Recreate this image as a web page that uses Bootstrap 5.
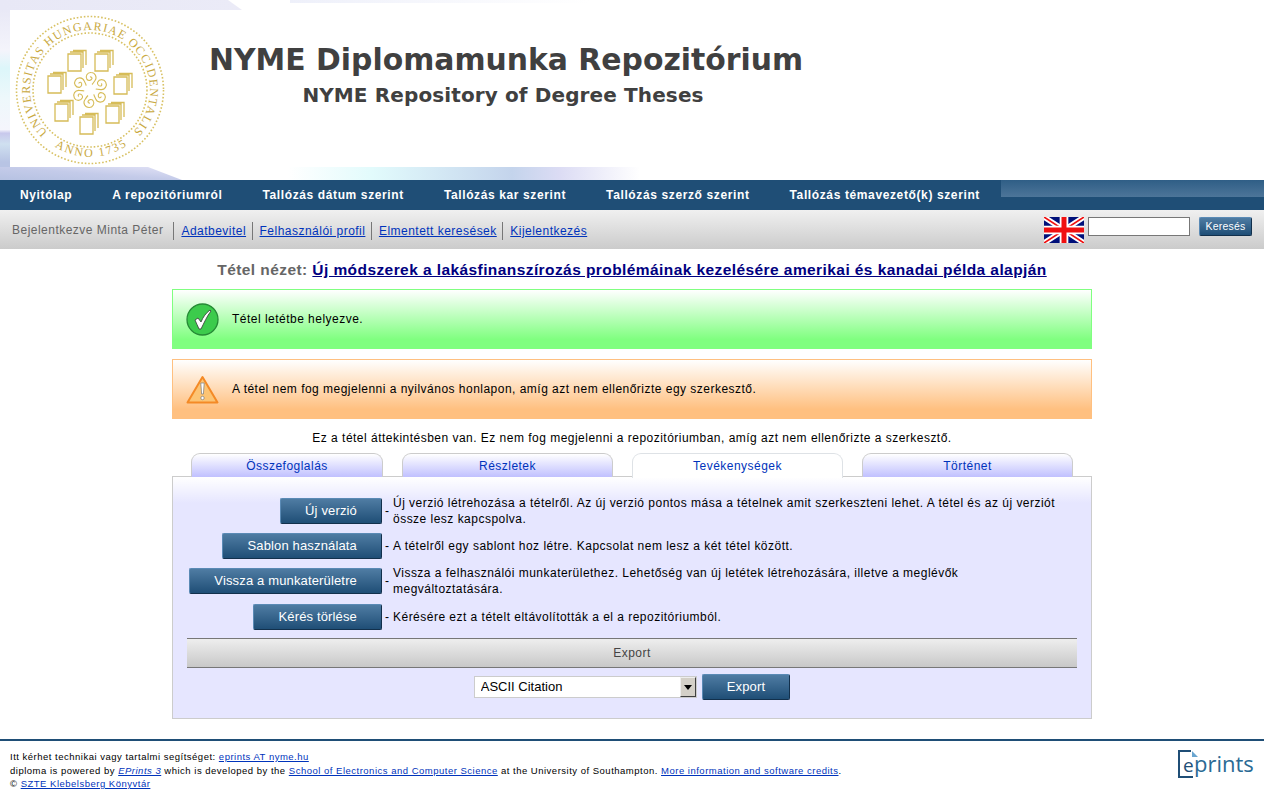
<!DOCTYPE html>
<html lang="hu">
<head>
<meta charset="UTF-8">
<title>NYME Diplomamunka Repozitórium</title>
<link href="https://cdn.jsdelivr.net/npm/bootstrap@5.3.0/dist/css/bootstrap.min.css" rel="stylesheet">
<style>
body { font-family: "Liberation Sans", Arial, sans-serif; font-size: 12px; line-height: 16px; color: #000; letter-spacing: .48px; }
a { color: #0033bb; }
.site-head { height: 180px; padding: 10px 0 13px 10px; position: relative; }
.head-art { position: absolute; left: 0; top: 0; }
.head-inner { height: 157px; background: #fff; position: relative; }
.seal { width: 170px; }
.head-titles { margin-left: 29px; padding-top: 32px; width: 594px; color: #404040; font-family: "DejaVu Sans", sans-serif; font-weight: 700; text-align: center; letter-spacing: 0; white-space: nowrap; }
.head-titles h1 { font-size: 29.85px; line-height: 36px; margin: 0; font-weight: 700; }
.head-titles h2 { font-size: 20px; line-height: 34px; margin: 0; padding-right: 6px; font-weight: 700; letter-spacing: .12px; }
.main-nav { height: 30px; background: #1f4e76; padding-left: 20px; white-space: nowrap; }
.main-nav a { color: #fff; font-weight: 700; text-decoration: none; letter-spacing: .62px; margin-right: 40px; line-height: 30px; }
.main-nav a:last-of-type { margin-right: 0; }
.nav-end { flex: none; width: 263px; height: 17px; background: linear-gradient(180deg, #2f5e86, #4d7599); }
.user-bar { height: 39px; background: linear-gradient(180deg, #f0f0f0, #cbcbcb); padding: 0 12px; }
.user-name { color: #666; margin-right: 10px; }
.user-bar .tool { border-left: 1px solid #777; padding: 0 5.5px 0 7px; line-height: 18px; margin-top: 2px; }
.search-box { width: 102px; height: 19px; border: 1px solid #777; background: #fff; margin: 0 9px 7px 4px; padding: 0; border-radius: 0; }
.page-title { margin: 12px 0 10px; font-size: 15.5px; line-height: 18px; font-weight: 700; color: #666; text-align: center; letter-spacing: .42px; }
.page-title a { color: #000080; }
.main-col { width: 920px; margin: 0 auto; }
.msg { height: 60px; margin: 0 0 10px; padding: 0 0 0 13px; border-radius: 0; gap: 13px; color: #000; }
.msg-ok { border: 1px solid #80ff80; background: linear-gradient(180deg, #fff, #80ff80 85%); }
.msg-warn { border: 1px solid #ffc080; background: linear-gradient(180deg, #fff, #ffc080 85%); }
.note-line { text-align: center; margin: 0; height: 24px; line-height: 18px; }
.tab-row { padding-left: 19px; gap: 19px; border: 0; height: 24px; position: relative; z-index: 1; }
.tab-row .nav-item { width: 211px; }
.tab-row .nav-item:first-child { width: 192px; }
.tab-row .nav-link { height: 24px; padding: 4px 0 0; margin: 0; line-height: 16px; color: #0033bb; text-align: center; border: 1px solid #ccc; border-bottom: 0; border-radius: 9px 9px 0 0; background: linear-gradient(180deg, #fff, #c0c0ff); }
.tab-row .nav-link.active { background: #fff; color: #0033bb; height: 25px; }
.tab-pane-box { height: 243px; margin-top: -1px; border: 1px solid #ccc; background: linear-gradient(180deg, #fff 0, #e6e6ff 26px); padding: 18px 14px 0; }
.act-row { display: flex; align-items: center; margin-bottom: 6px; }
.act-row:nth-child(3) { margin-bottom: 7px; }
.act-btn-col { width: 195px; text-align: right; flex: none; }
.act-dash { width: 11px; padding-left: 3px; flex: none; }
.act-text { width: 672px; }
.nyme-btn { display: inline-block; height: 26px; padding: 0 24px; border-radius: 2px; border: 1px solid; border-color: #5a8ab5 #12304c #12304c #5a8ab5; background: linear-gradient(180deg, #4f7ca3, #1f4e76); color: #fff; font-size: 13px; line-height: 23px; letter-spacing: .15px; }
.nyme-btn:hover { color: #fff; }
.btn-small { height: 19px; width: 53px; padding: 0; margin-bottom: 7px; font-size: 10.5px; line-height: 16px; letter-spacing: .2px; }
.export-head { height: 30px; margin-top: 8px; border-top: 1px solid #777; border-bottom: 1px solid #777; background: linear-gradient(180deg, #eee, #c8c8c8); color: #444; text-align: center; line-height: 28px; }
.export-row { margin-top: 6px; gap: 5px; }
.select-wrap { width: 223px; height: 22px; border: 1px solid #ccc; background: #fff; }
.select-wrap select { flex: 1; min-width: 0; border: 0; appearance: none; background: transparent; padding: 0 0 0 6px; font-size: 13px; letter-spacing: 0; outline: 0; }
.select-arrow { width: 16px; height: 20px; background: #d4d0c8; border: 1px solid; border-color: #eee #404040 #404040 #eee; }
.site-foot { margin-top: 20px; border-top: 2px solid #1f4e76; padding: 9px 10px 0; font-size: 9.5px; line-height: 13.5px; letter-spacing: .5px; }
.site-foot a { color: #0033bb; }
.seal text { font-family: "Liberation Serif", serif; fill: #c9a93f; letter-spacing: 0; }
</style>
</head>
<body>

<header class="site-head">
  <svg class="head-art" width="1264" height="180" viewBox="0 0 1264 180" aria-hidden="true">
    <defs>
      <linearGradient id="artLeft" x1="0" y1="0" x2="0" y2="1">
        <stop offset="0" stop-color="#e6e6f5"/><stop offset=".28" stop-color="#f4f4fb"/>
        <stop offset=".38" stop-color="#dcf6fa"/><stop offset=".55" stop-color="#eef8fb"/>
        <stop offset=".72" stop-color="#f5f5fc"/><stop offset=".74" stop-color="#c8c8ec"/>
        <stop offset=".8" stop-color="#cfe0f0"/><stop offset=".9" stop-color="#b8c4e4"/>
        <stop offset="1" stop-color="#b8c4e4"/>
      </linearGradient>
      <linearGradient id="artTop" x1="0" y1="0" x2="1" y2="0">
        <stop offset="0" stop-color="#e8e8f6"/><stop offset="1" stop-color="#ebebf7"/>
      </linearGradient>
      <linearGradient id="artPale" x1="0" y1="0" x2="1" y2="0">
        <stop offset="0" stop-color="#eef0fa"/><stop offset="1" stop-color="#fff"/>
      </linearGradient>
      <linearGradient id="artBottom" x1="0" y1="1" x2="1" y2="0">
        <stop offset="0" stop-color="#b6c2e2"/><stop offset=".5" stop-color="#c4cbe9"/><stop offset="1" stop-color="#e2e2f6"/>
      </linearGradient>
      <linearGradient id="artBand" x1="240" y1="0" x2="640" y2="0" gradientUnits="userSpaceOnUse">
        <stop offset="0" stop-color="#fff"/><stop offset=".12" stop-color="#fff"/>
        <stop offset=".33" stop-color="#e2fbfc"/><stop offset=".68" stop-color="#c4d4ec"/>
        <stop offset=".8" stop-color="#dcdcf4"/><stop offset="1" stop-color="#fff"/>
      </linearGradient>
    </defs>
    <rect width="10" height="180" fill="url(#artLeft)"/>
    <path d="M0 0H228L242 10H0Z" fill="url(#artTop)"/>
    <rect x="290" width="300" height="3" fill="url(#artPale)"/>
    <path d="M0 167H148L182 180H0Z" fill="url(#artBottom)"/>
    <rect x="240" y="167" width="400" height="13" fill="url(#artBand)"/>
  </svg>
  <div class="head-inner d-flex">
    <svg class="seal" width="170" height="157" viewBox="0 0 170 157">
      <defs>
        <path id="arcTop" d="M37.600 122.400A60 60 0 1 1 122.400 122.400"/>
        <path id="arcBot" d="M42 135A67 67 0 0 0 118 135"/>
        <g id="bookL" fill="none" stroke="#d6bc58" stroke-width="1.300">
          <path d="M0 4H13V21H0Z"/>
          <path d="M2 2H15V18M5 .5H18V15"/>
        </g>
        <g id="curl" fill="none" stroke="#d6bc58" stroke-width="1.100">
          <path d="M0 0a1.500 1.500 0 0 1 2 1.500a3 3 0 0 1 -5 1a4.500 4.500 0 0 1 4 -7a5 5 0 0 1 4 8q-2 3 -3 4"/>
        </g>
      </defs>
      <circle cx="80" cy="80" r="73.500" fill="none" stroke="#d8c163" stroke-width="1.600" stroke-dasharray="1.600 1.900"/>
      <circle cx="80" cy="80" r="57" fill="none" stroke="#d8c163" stroke-width="1.600" stroke-dasharray="1.600 1.900"/>
      <text font-size="12"><textPath href="#arcTop" textLength="281">UNIVERSITAS HUNGARIAE OCCIDENTALIS</textPath></text>
      <text font-size="12"><textPath href="#arcBot" startOffset="3" textLength="76">ANNO 1735</textPath></text>
      <use href="#bookL" x="58" y="40"/>
      <use href="#bookL" x="85" y="40"/>
      <use href="#bookL" x="38" y="62"/>
      <use href="#bookL" x="104" y="63"/>
      <use href="#bookL" x="45" y="90"/>
      <use href="#bookL" x="96" y="92"/>
      <use href="#bookL" x="70" y="103"/>
      <use href="#curl" transform="translate(80 67)"/>
      <use href="#curl" transform="rotate(60 80 80) translate(80 67)"/>
      <use href="#curl" transform="rotate(120 80 80) translate(80 67)"/>
      <use href="#curl" transform="rotate(180 80 80) translate(80 67)"/>
      <use href="#curl" transform="rotate(240 80 80) translate(80 67)"/>
      <use href="#curl" transform="rotate(300 80 80) translate(80 67)"/>
    </svg>
    <div class="head-titles">
      <h1>NYME Diplomamunka Repozitórium</h1>
      <h2>NYME Repository of Degree Theses</h2>
    </div>
  </div>
</header>

<nav class="main-nav d-flex">
  <a href="#">Nyitólap</a>
  <a href="#">A repozitóriumról</a>
  <a href="#">Tallózás dátum szerint</a>
  <a href="#">Tallózás kar szerint</a>
  <a href="#">Tallózás szerző szerint</a>
  <a href="#">Tallózás témavezető(k) szerint</a>
  <div class="nav-end ms-auto"></div>
</nav>

<div class="user-bar d-flex align-items-center">
  <span class="user-name">Bejelentkezve Minta Péter</span>
  <a class="tool" href="#">Adatbevitel</a>
  <a class="tool" href="#">Felhasználói profil</a>
  <a class="tool" href="#">Elmentett keresések</a>
  <a class="tool" href="#">Kijelentkezés</a>
  <form class="d-flex align-items-center ms-auto">
    <svg width="40" height="26" viewBox="0 0 60 39">
      <rect width="60" height="39" fill="#00107a"/>
      <path d="M0 0 60 39M60 0 0 39" stroke="#fff" stroke-width="8"/>
      <path d="M0 0 60 39M60 0 0 39" stroke="#f01010" stroke-width="2.500"/>
      <path d="M30 0V39M0 19.500H60" stroke="#fff" stroke-width="13"/>
      <path d="M30 0V39M0 19.500H60" stroke="#f01010" stroke-width="7.500"/>
    </svg>
    <input class="search-box" type="text" aria-label="Keresés">
    <a class="nyme-btn btn-small text-center text-decoration-none" href="#">Keresés</a>
  </form>
</div>

<h2 class="page-title">Tétel nézet: <a href="#">Új módszerek a lakásfinanszírozás problémáinak kezelésére amerikai és kanadai példa alapján</a></h2>

<main class="main-col">
  <div class="alert msg msg-ok d-flex align-items-center">
    <svg width="33" height="33" viewBox="0 0 33 33">
      <circle cx="16.500" cy="16.500" r="15.500" fill="#3ccb4c" stroke="#258a35" stroke-width="1.300"/>
      <path d="M9 17 l3-2 3 4 C17 14 20 10 24 7 l1 1 C21 13 18 20 15 26 l-2 0 C12 23 10 20 9 17z" fill="#fff" stroke="#333" stroke-width=".8"/>
    </svg>
    <div>Tétel letétbe helyezve.</div>
  </div>
  <div class="alert msg msg-warn d-flex align-items-center">
    <svg width="33" height="29" viewBox="0 0 33 29">
      <path d="M16.500 2 L31.500 27.500 H1.500Z" fill="#fcc474" stroke="#f48a26" stroke-width="2" stroke-linejoin="round"/>
      <path d="M14.800 8 h3.400 l-.8 11 h-1.800z" fill="#fff" stroke="#777" stroke-width=".7"/>
      <circle cx="16.500" cy="23" r="1.700" fill="#fff" stroke="#777" stroke-width=".7"/>
    </svg>
    <div>A tétel nem fog megjelenni a nyilvános honlapon, amíg azt nem ellenőrizte egy szerkesztő.</div>
  </div>
  <p class="note-line">Ez a tétel áttekintésben van. Ez nem fog megjelenni a repozitóriumban, amíg azt nem ellenőrizte a szerkesztő.</p>

  <ul class="nav nav-tabs tab-row">
    <li class="nav-item"><a class="nav-link" href="#">Összefoglalás</a></li>
    <li class="nav-item"><a class="nav-link" href="#">Részletek</a></li>
    <li class="nav-item"><a class="nav-link active" href="#">Tevékenységek</a></li>
    <li class="nav-item"><a class="nav-link" href="#">Történet</a></li>
  </ul>
  <div class="tab-pane-box">
    <div class="act-row">
      <div class="act-btn-col"><a class="nyme-btn text-decoration-none" href="#">Új verzió</a></div>
      <div class="act-dash">-</div>
      <div class="act-text">Új verzió létrehozása a tételről. Az új verzió pontos mása a tételnek amit szerkeszteni lehet. A tétel és az új verziót össze lesz kapcspolva.</div>
    </div>
    <div class="act-row">
      <div class="act-btn-col"><a class="nyme-btn text-decoration-none" href="#">Sablon használata</a></div>
      <div class="act-dash">-</div>
      <div class="act-text">A tételről egy sablont hoz létre. Kapcsolat nem lesz a két tétel között.</div>
    </div>
    <div class="act-row">
      <div class="act-btn-col"><a class="nyme-btn text-decoration-none" href="#">Vissza a munkaterületre</a></div>
      <div class="act-dash">-</div>
      <div class="act-text">Vissza a felhasználói munkaterülethez. Lehetőség van új letétek létrehozására, illetve a meglévők megváltoztatására.</div>
    </div>
    <div class="act-row">
      <div class="act-btn-col"><a class="nyme-btn text-decoration-none" href="#">Kérés törlése</a></div>
      <div class="act-dash">-</div>
      <div class="act-text">Kérésére ezt a tételt eltávolították a el a repozitóriumból.</div>
    </div>
    <div class="export-head">Export</div>
    <form class="export-row d-flex justify-content-center align-items-center">
      <div class="select-wrap d-flex align-items-center">
        <select aria-label="Export"><option>ASCII Citation</option></select>
        <span class="select-arrow d-flex align-items-center justify-content-center">
          <svg width="8" height="5" viewBox="0 0 8 5"><path d="M0 0H8L4 5Z" fill="#000"/></svg>
        </span>
      </div>
      <a class="nyme-btn text-decoration-none" href="#">Export</a>
    </form>
  </div>
</main>

<footer class="site-foot d-flex justify-content-between">
  <div>
    Itt kérhet technikai vagy tartalmi segítséget: <a href="#">eprints AT nyme.hu</a><br>
    diploma is powered by <a href="#"><em>EPrints 3</em></a> which is developed by the <a href="#">School of Electronics and Computer Science</a> at the University of Southampton. <a href="#">More information and software credits</a>.<br>
    © <a href="#">SZTE Klebelsberg Könyvtár</a>
  </div>
  <svg width="80" height="32" viewBox="0 0 80 32">
    <path d="M17 1H5V27H19" fill="none" stroke="#1f4e76" stroke-width="2"/>
    <path d="M18 1 24 7H18Z" fill="#6aa6d0"/>
    <text x="9" y="22" font-family="Open Sans, sans-serif" font-size="19" fill="#1f4e76" letter-spacing="0">e</text>
    <text x="20" y="22" font-family="Open Sans, sans-serif" font-size="22" fill="#2a6a94" letter-spacing="0">prints</text>
  </svg>
</footer>

<script src="https://cdn.jsdelivr.net/npm/bootstrap@5.3.0/dist/js/bootstrap.bundle.min.js"></script>
</body>
</html>
